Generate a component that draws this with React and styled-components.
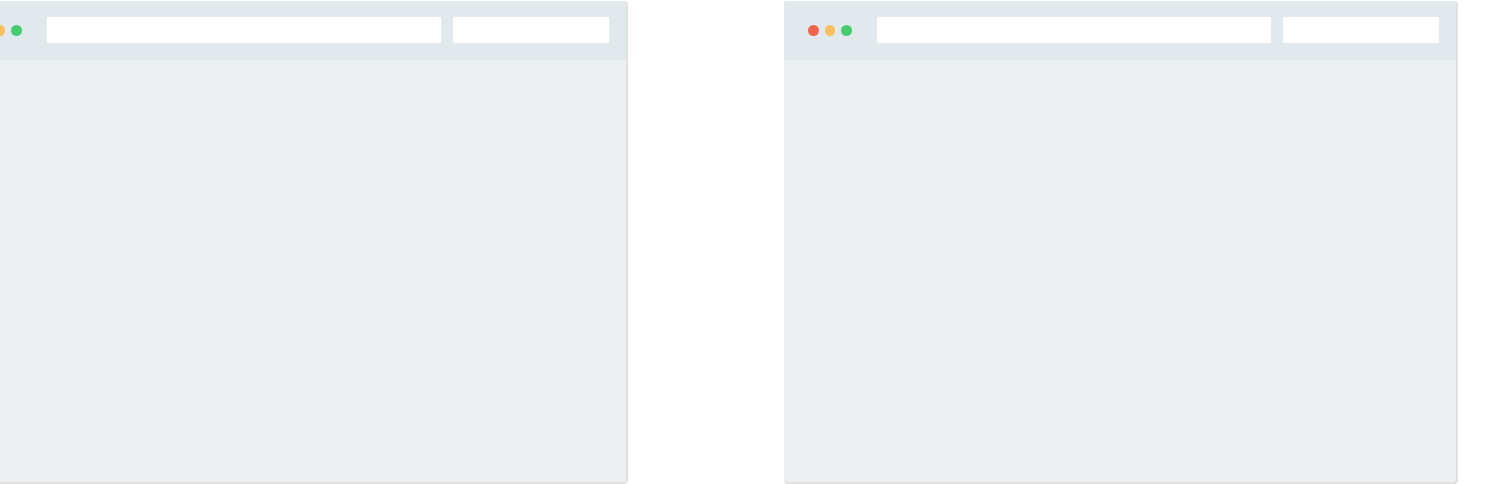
import React from "react";
import styled, { createGlobalStyle } from "styled-components";

const GlobalStyle = createGlobalStyle`
  *, *::before, *::after { box-sizing: border-box; }
  body { margin: 0; background: #fff; font-family: "Liberation Sans", Arial, sans-serif; }
`;

const Stage = styled.main`
  display: flex;
  gap: 158px;
  height: 484px;
  padding-top: 1px;
  overflow: hidden;
`;

const Window = styled.section`
  flex: none;
  width: 672px;
  height: 481px;
  margin-left: ${({ $offset }) => $offset || 0}px;
  border-radius: 3px;
  background: #ecf0f1;
  box-shadow: 1px 1px 0 1px #e0e0e0;
`;

const TitleBar = styled.header`
  display: flex;
  align-items: flex-start;
  height: 59px;
  padding: 16px 17px 0 24px;
  border-radius: 3px 3px 0 0;
  background: #e1e9ec;
`;

const Lights = styled.div`
  display: flex;
  align-items: center;
  gap: 5.75px;
  margin: 8px 25px 0 0;
`;

const Light = styled.span`
  width: ${({ $width }) => $width || 11}px;
  height: 11px;
  border-radius: 50%;
  background: ${({ $color }) => $color};
`;

const Field = styled.div`
  width: ${({ $width }) => $width}px;
  height: 26px;
  border-radius: 1px;
  background: #fff;

  & + & { margin-left: 12px; }
`;

function BrowserWindow({ offset }) {
  return (
    <Window $offset={offset}>
      <TitleBar>
        <Lights>
          <Light $color="#f0634c" />
          <Light $color="#fbbd5e" $width={10.5} />
          <Light $color="#47cb71" />
        </Lights>
        <Field $width={394} />
        <Field $width={156} />
      </TitleBar>
    </Window>
  );
}

export default function App() {
  return (
    <>
      <GlobalStyle />
      <Stage>
        <BrowserWindow offset={-46} />
        <BrowserWindow />
      </Stage>
    </>
  );
}
